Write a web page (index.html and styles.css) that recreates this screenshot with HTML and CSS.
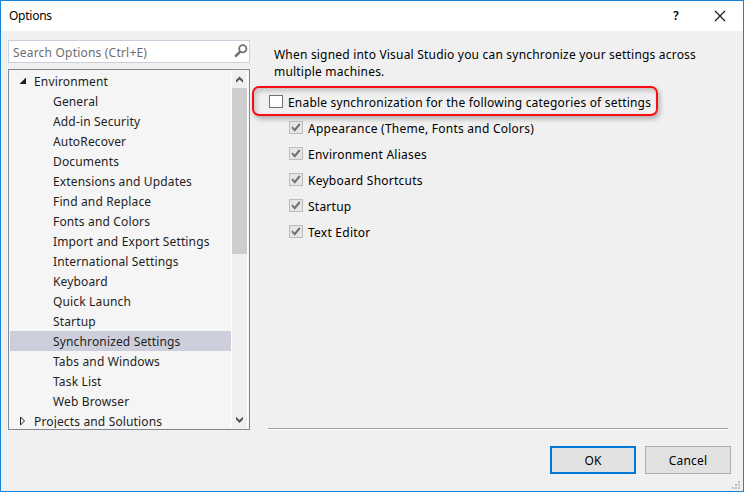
FILE: index.html
```html
<!DOCTYPE html>
<html lang="en">
<head>
<meta charset="utf-8">
<title>Options</title>
<link rel="stylesheet" href="styles.css">
</head>
<body>
<div class="dialog">
  <header class="titlebar">
    <h1>Options</h1>
    <span class="help">?</span>
    <svg class="close" width="12" height="12" viewBox="0 0 12 12"><path d="M1 1L11 11M11 1L1 11"/></svg>
  </header>
  <div class="body">
    <aside class="side">
      <div class="search">
        <span>Search Options (Ctrl+E)</span>
        <svg width="14" height="14" viewBox="0 0 14 14"><circle cx="8.8" cy="4.8" r="3.6"/><path d="M6.2 7.6L1.2 12.6"/></svg>
      </div>
      <div class="tree">
        <ul class="nodes">
          <li class="root"><svg width="8" height="8" viewBox="0 0 8 8"><path class="solid" d="M7 0.5V7H0.5Z"/></svg><span>Environment</span></li>
          <li><span>General</span></li>
          <li><span>Add-in Security</span></li>
          <li><span>AutoRecover</span></li>
          <li><span>Documents</span></li>
          <li><span>Extensions and Updates</span></li>
          <li><span>Find and Replace</span></li>
          <li><span>Fonts and Colors</span></li>
          <li><span>Import and Export Settings</span></li>
          <li><span>International Settings</span></li>
          <li><span>Keyboard</span></li>
          <li><span>Quick Launch</span></li>
          <li><span>Startup</span></li>
          <li class="selected"><span>Synchronized Settings</span></li>
          <li><span>Tabs and Windows</span></li>
          <li><span>Task List</span></li>
          <li><span>Web Browser</span></li>
          <li class="root"><svg width="8" height="10" viewBox="0 0 8 10"><path class="hollow" d="M1.5 1V9L5.5 5Z"/></svg><span>Projects and Solutions</span></li>
        </ul>
        <div class="scrollbar">
          <svg width="15" height="17" viewBox="0 0 15 17"><path d="M4 11.7V9.1L7.5 5.6L11 9.1V11.7L7.5 8.4Z"/></svg>
          <div class="thumb"></div>
          <svg class="down" width="15" height="17" viewBox="0 0 15 17"><path d="M4 5.8V8.6L7.5 12.1L11 8.6V5.8L7.5 9.1Z"/></svg>
        </div>
      </div>
    </aside>
    <main class="page">
      <p class="intro">When signed into Visual Studio you can synchronize your settings across<br>multiple machines.</p>
      <div class="enable"><i class="box"></i><span>Enable synchronization for the following categories of settings</span></div>
      <ul class="categories">
        <li><i class="box off"><svg viewBox="0 0 12 11"><path d="M2 5.2L4.7 8.2L9.8 2"/></svg></i><span>Appearance (Theme, Fonts and Colors)</span></li>
        <li><i class="box off"><svg viewBox="0 0 12 11"><path d="M2 5.2L4.7 8.2L9.8 2"/></svg></i><span>Environment Aliases</span></li>
        <li><i class="box off"><svg viewBox="0 0 12 11"><path d="M2 5.2L4.7 8.2L9.8 2"/></svg></i><span>Keyboard Shortcuts</span></li>
        <li><i class="box off"><svg viewBox="0 0 12 11"><path d="M2 5.2L4.7 8.2L9.8 2"/></svg></i><span>Startup</span></li>
        <li><i class="box off"><svg viewBox="0 0 12 11"><path d="M2 5.2L4.7 8.2L9.8 2"/></svg></i><span>Text Editor</span></li>
      </ul>
    </main>
  </div>
  <footer class="actions">
    <div class="button primary">OK</div>
    <div class="button">Cancel</div>
  </footer>
  <svg class="grip" width="8" height="8" viewBox="0 0 8 8"><path d="M6 0h2v2h-2zM3 3h2v2h-2zM6 3h2v2h-2zM0 6h2v2h-2zM3 6h2v2h-2zM6 6h2v2h-2z"/></svg>
</div>
</body>
</html>
```

FILE: styles.css
```css
* { box-sizing: border-box; }
body { margin: 0; font: 12px/20px "Noto Sans", "Open Sans", sans-serif; letter-spacing: 0.2px; color: #000; }
ul, p, h1 { margin: 0; padding: 0; list-style: none; }
svg { display: block; flex: none; fill: none; }
.dialog { position: relative; width: 744px; height: 492px; border: 1px solid #1883d7; background: #f0f0f0; display: flex; flex-direction: column; }
.titlebar { height: 30px; flex: none; background: #fff; display: flex; align-items: center; padding: 0 17px 0 8px; }
h1 { font-size: 12px; font-weight: 400; letter-spacing: -0.25px; flex: 1; }
.help { font-size: 12px; font-weight: 600; margin-right: 35px; }
.close path { stroke: #111; stroke-width: 1.1; }
.body { height: 399px; flex: none; display: flex; }
.side { width: 242px; margin: 9px 0 0 7px; flex: none; }
.search { height: 23px; border: 1px solid #cccedb; background: #fff; color: #6d6d6d; display: flex; align-items: center; justify-content: space-between; padding: 3px 1px 0 4px; }
.search svg { margin-top: -4px; }
.search circle { stroke: #717171; stroke-width: 1.8; }
.search path { stroke: #717171; stroke-width: 2.6; }
.tree { height: 361px; margin-top: 6px; border: 1px solid #828790; background: #f5f5f5; padding: 1px; display: flex; color: #1e1e1e; letter-spacing: 0.15px; overflow: hidden; }
.nodes { width: 221px; height: 357px; overflow: hidden; }
.nodes li { height: 20px; padding-left: 43px; display: flex; align-items: center; white-space: nowrap; }
.nodes span { padding-top: 2px; line-height: 12px; }
.nodes .root { padding-left: 9px; }
.root span { margin-left: 7px; }
.nodes .selected { background: #cccedb; }
.solid { fill: #1e1e1e; }
.hollow { stroke: #1e1e1e; }
.scrollbar { width: 17px; border: solid #fff; border-width: 0 1px; background: #f0f0f0; display: flex; flex-direction: column; }
.scrollbar path { fill: #555; }
.thumb { height: 166px; background: #cdcdcd; }
.down { margin-top: auto; }
.page { width: 460px; height: 398px; margin-left: 18px; border-bottom: 1px solid #a0a0a0; box-shadow: 0 1px #fff; display: flex; flex-direction: column; padding-top: 15px; }
.intro { padding-left: 6px; line-height: 17px; white-space: nowrap; }
.enable { width: 406px; height: 30px; margin: 6px 0 0 -16px; border: 2px solid #fa0c12; border-radius: 7px; box-shadow: 2px 3px 5px #0004, inset 2px 3px 5px #0003; display: flex; align-items: center; padding-left: 15px; white-space: nowrap; }
.box { display: block; width: 14px; height: 13px; border: 1px solid #707070; background: #fff; flex: none; }
.enable .box { margin-top: 1px; }
.box + span { margin-left: 5px; padding-top: 2px; }
.enable .box + span { padding-top: 3px; letter-spacing: 0.19px; }
.off { border-color: #bcbcbc; background: #e6e6e6; }
.categories .off { margin-top: -1px; }
.off svg { width: 12px; height: 11px; }
.off path { stroke: #707070; stroke-width: 2; }
.categories { margin: -1px 0 0 21px; letter-spacing: 0.24px; }
.categories li { height: 26px; display: flex; align-items: center; }
.actions { display: flex; justify-content: flex-end; gap: 9px; padding: 16px 12px 0 0; }
.button { width: 86px; height: 28px; padding-top: 2px; border: 1px solid #adadad; background: #e1e1e1; display: grid; place-items: center; }
.primary { border: 2px solid #0078d7; letter-spacing: 0; }
.grip { position: absolute; right: 3px; bottom: 2px; fill: #bfbfbf; }
```
